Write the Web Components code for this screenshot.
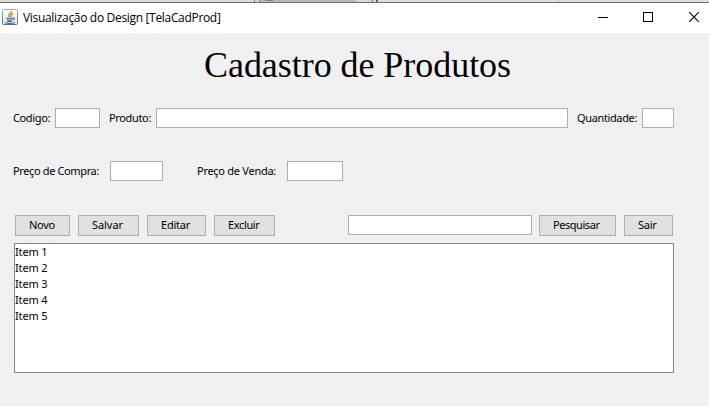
<!DOCTYPE html>
<html lang="pt-BR">
<head>
<meta charset="utf-8">
<title>Visualização do Design [TelaCadProd]</title>
<style>
html,body{margin:0;height:100%;overflow:hidden;background:#f0f0f0}
body{font:11px/16px "Noto Sans","Open Sans",sans-serif;color:#000}
</style>
</head>
<body>
<app-window></app-window>
<script>
function define(name, html, setup) {
  const t = document.createElement('template');
  t.innerHTML = html;
  customElements.define(name, class extends HTMLElement {
    connectedCallback() {
      if (this.shadowRoot) return;
      this.attachShadow({mode: 'open'}).appendChild(t.content.cloneNode(true));
      if (setup) setup(this, this.shadowRoot);
    }
  });
}

/* A line of text whose letter spacing is adjusted to fill the width in "w". */
define('fit-text', `<style>
:host{display:block;white-space:pre;flex:none}
span{display:inline-block}
</style><span><slot></slot></span>`, (host, root) => {
  const w = +host.getAttribute('w');
  host.style.width = w + 'px';
  const s = root.querySelector('span');
  const n = host.textContent.length;
  s.style.letterSpacing = (w - s.getBoundingClientRect().width) / n + 'px';
});

define('text-field', `<style>
:host{display:block;flex:none;box-sizing:border-box;height:20px;background:#fff;border:1px solid #abadb3}
</style>`, host => { host.style.width = host.getAttribute('w') + 'px'; });

define('push-button', `<style>
:host{display:flex;flex:none;box-sizing:border-box;height:21px;align-items:flex-start;padding:1px 0 0 13px;background:#e1e1e1;border:1px solid #adadad}
</style><slot></slot>`, host => { host.style.width = host.getAttribute('w') + 'px'; });

define('java-icon', `<style>:host{display:block;width:16px;height:16px;flex:none}svg{display:block}</style>
<svg width="16" height="16" viewBox="0 0 16 16" fill="none">
<defs><linearGradient id="g" x2="0" y2="1"><stop stop-color="#9aaebf"/><stop offset="1" stop-color="#526f88"/></linearGradient>
<linearGradient id="b" x2="0" y2="1"><stop stop-color="#fff"/><stop offset="1" stop-color="#dce5ed"/></linearGradient></defs>
<rect x=".5" y=".5" width="15" height="15" rx="1" fill="url(#b)" stroke="url(#g)"/>
<path d="M9.4 2.2c.6 2.2-3.6 2.6-2.6 4.6l1 1.4M11 4.5c-2.4.9-2.6 1.8-1.4 3.7" stroke="#e77b2f" stroke-width="1.4"/>
<path d="M4 9.2h6.5M5 11h5M5.2 12.4h4.4M10.8 9.1c2.1-.5 2 1.3-.2 1.8M3 13.7c2.6.8 7.6.8 10-.3" stroke="#3f6b91" stroke-width="1.1"/>
</svg>`);

define('desktop-strip', `<style>
:host{display:flex;height:2px;border-bottom:1px solid #6d6d6d;background:#d9d9d9}
i{display:block;height:2px;flex:none}
.line{background:#777;width:1px}
.tab{width:96px;background:#b9b9b9;display:flex;padding-left:5px;box-sizing:border-box}
.mark{width:8px;height:1px;background:#858585}
.gap4{width:4px}.gap3{width:3px}.left{width:254px}.after{width:16px}.edge{width:2px;background:#666}
.pane{width:180px;background:#e0e0e0}.split{width:1px;background:#c4c4c4}.rest{flex:1;background:#e0e0e0}
</style><i class="left"></i><i class="line"></i><i class="gap4"></i><i class="line"></i><i class="tab"><i class="mark"></i></i><i class="after"></i><i class="line"></i><i class="gap3"></i><i class="edge"></i><i class="pane"></i><i class="split"></i><i class="rest"></i>`);

define('title-bar', `<style>
:host{display:flex;height:30px;box-sizing:border-box;background:#fff;padding:6px 10px 0 2px;font:12px/16px "Open Sans","Noto Sans",sans-serif}
fit-text{margin:1px 0 0 5px}
.controls{display:block;margin-left:auto}
</style><java-icon></java-icon><fit-text w="197.5">Visualização do Design [TelaCadProd]</fit-text>
<svg class="controls" width="101" height="16" viewBox="0 0 101 16" fill="none" stroke="#000">
<path d="M0 8.5h10M45.5 3.5h9v9h-9z" shape-rendering="crispEdges"/><path d="M91.2 3.2l9.6 9.6M100.8 3.2l-9.6 9.6" stroke-width="1.1"/></svg>`);

define('form-row', `<style>
:host{display:flex;height:20px}
::slotted(.label){padding-top:2px}
</style><slot></slot>`);

define('item-list', `<style>
:host{display:block;box-sizing:border-box;width:660px;height:130px;margin:7px 0 0 14px;background:#fff;border:1px solid #82878f}
</style><slot></slot>`);

define('product-form', `<style>
:host{display:block}
h1{display:flex;margin:0;height:75px;padding:12px 0 0 204px;box-sizing:border-box;font:36px/40px "Liberation Serif",serif}
form-row{padding-left:13px}
.prices{margin-top:33px}
.actions{display:flex;height:21px;margin-top:34px;padding-left:15px}
</style>
<h1><fit-text w="307">Cadastro de Produtos</fit-text></h1>
<form-row>
<fit-text class="label" w="37">Codigo:</fit-text><text-field w="45" style="margin-left:5px"></text-field>
<fit-text class="label" w="42" style="margin-left:9px">Produto:</fit-text><text-field w="412" style="margin-left:5px"></text-field>
<fit-text class="label" w="60" style="margin-left:9px">Quantidade:</fit-text><text-field w="32" style="margin-left:5px"></text-field>
</form-row>
<form-row class="prices">
<fit-text class="label" w="86">Preço de Compra:</fit-text><text-field w="53" style="margin-left:11px"></text-field>
<fit-text class="label" w="79" style="margin-left:34px">Preço de Venda:</fit-text><text-field w="56" style="margin-left:11px"></text-field>
</form-row>
<div class="actions">
<push-button w="55"><fit-text w="26">Novo</fit-text></push-button>
<push-button w="61" style="margin-left:8px"><fit-text w="31">Salvar</fit-text></push-button>
<push-button w="59" style="margin-left:8px"><fit-text w="29">Editar</fit-text></push-button>
<push-button w="61" style="margin-left:8px"><fit-text w="31.5">Excluir</fit-text></push-button>
<text-field w="184" style="margin-left:73px"></text-field>
<push-button w="77" style="margin-left:7px"><fit-text w="46.5">Pesquisar</fit-text></push-button>
<push-button w="49" style="margin-left:8px"><fit-text w="18.5">Sair</fit-text></push-button>
</div>
<item-list>
<fit-text w="32.5">Item 1</fit-text><fit-text w="32.5">Item 2</fit-text><fit-text w="32.5">Item 3</fit-text><fit-text w="32.5">Item 4</fit-text><fit-text w="32.5">Item 5</fit-text>
</item-list>`);

define('app-window', `<style>
:host{display:block;width:709px;height:406px;background:#f0f0f0}
</style><desktop-strip></desktop-strip><title-bar></title-bar><product-form></product-form>`);
</script>
</body>
</html>
